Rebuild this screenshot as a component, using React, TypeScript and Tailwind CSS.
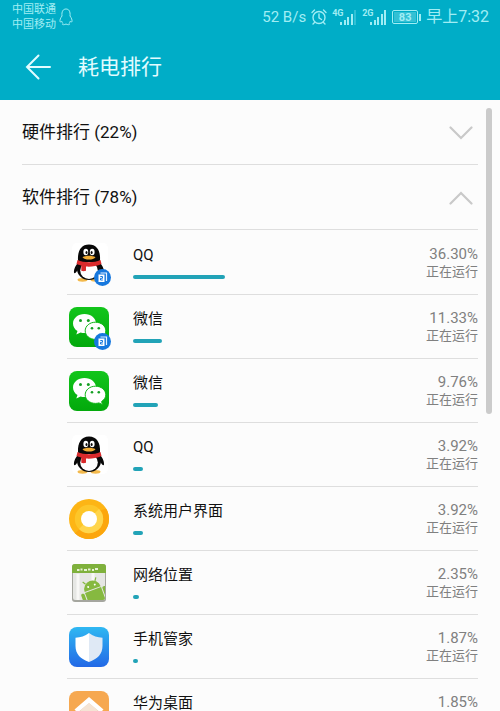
import { useState } from "react";

type IconName = "qq" | "wechat" | "ring" | "location" | "shield" | "home";

interface AppUsage {
  name: string;
  icon: IconName;
  percent: number;
  cloned?: boolean;
}

const apps: AppUsage[] = [
  { name: "QQ", icon: "qq", percent: 36.3, cloned: true },
  { name: "微信", icon: "wechat", percent: 11.33, cloned: true },
  { name: "微信", icon: "wechat", percent: 9.76 },
  { name: "QQ", icon: "qq", percent: 3.92 },
  { name: "系统用户界面", icon: "ring", percent: 3.92 },
  { name: "网络位置", icon: "location", percent: 2.35 },
  { name: "手机管家", icon: "shield", percent: 1.87 },
  { name: "华为桌面", icon: "home", percent: 1.85 },
];

function QQIcon() {
  return (
    <svg viewBox="0 0 40 40" className="size-10" aria-hidden="true">
      <rect x="3" width="36" height="39" rx="5" fill="#fff" />
      <ellipse cx="13.5" cy="36.8" rx="5" ry="1.9" fill="#f3b94c" />
      <ellipse cx="26.5" cy="36.8" rx="5" ry="1.9" fill="#f3b94c" />
      <path d="M9.5 19C7 22 4.600 26 5 29.500c.2 1.500 2 .3 3.400-2zM30.500 19c2.500 3 4.900 7 4.500 10.500-.2 1.500-2 .3-3.400-2z" fill="#080808" />
      <ellipse cx="20" cy="26" rx="12" ry="11" fill="#080808" />
      <path d="M9 17C8.500 8 12 1.500 20 1.500S31.500 8 31 17l-2 6H11z" fill="#080808" />
      <ellipse cx="20" cy="27.500" rx="8.800" ry="8.500" fill="#fff" />
      <ellipse cx="16.800" cy="9" rx="2.400" ry="3.200" fill="#fff" />
      <ellipse cx="23.200" cy="9" rx="2.400" ry="3.200" fill="#fff" />
      <ellipse cx="17.500" cy="9.500" rx="1" ry="1.500" fill="#080808" />
      <ellipse cx="22.600" cy="9.500" rx="1" ry="1.500" fill="#080808" />
      <path d="M13.500 14.200c3-2 10-2 13 0-2 3.200-11 3.200-13 0z" fill="#f0ac35" />
      <path d="M8.500 17c6.500 3 16.500 3 23 0l1 4c-5 2.200-11 3-15.500 2.500v4.200c-1.500.6-3.500.6-4.700 0v-5.200c-2-.4-3.500-.9-4.800-1.500z" fill="#d92a2c" />
    </svg>
  );
}

function WeChatIcon() {
  return (
    <svg viewBox="0 0 40 40" className="size-10" aria-hidden="true">
      <defs>
        <linearGradient id="wechat" x1="0" y1="0" x2="0" y2="1">
          <stop stopColor="#12c51b" />
          <stop offset="1" stopColor="#03a90c" />
        </linearGradient>
      </defs>
      <rect width="40" height="40" rx="8" fill="url(#wechat)" />
      <path d="M15.500 7C9 7 4 11.200 4 16.500c0 3.200 1.800 5.900 4.500 7.600L7.300 27.500l4.300-2.100c1.200.4 2.500.6 3.900.6C22 26 27 21.800 27 16.500S22 7 15.500 7z" fill="#fff" />
      <path d="M26.500 15.200c-5.800 0-10.300 3.800-10.300 8.600s4.500 8.600 10.300 8.600c1.200 0 2.300-.2 3.400-.5l3.600 1.700-.9-3.100c2.600-1.600 4.200-4 4.200-6.700 0-4.800-4.500-8.600-10.300-8.600z" fill="#fff" stroke="#0eb516" />
      <g fill="#159f24">
        <circle cx="11.500" cy="13.500" r="1.500" />
        <circle cx="19.300" cy="13.500" r="1.500" />
        <circle cx="23" cy="21.200" r="1.300" />
        <circle cx="29.800" cy="21.200" r="1.300" />
      </g>
    </svg>
  );
}

function RingIcon() {
  return (
    <svg viewBox="0 0 40 40" className="size-10" aria-hidden="true">
      <circle cx="20" cy="20" r="20" fill="#fdb515" />
      <path d="M6 34.300A20 20 0 0 0 40 20c0-4-1-7.500-3-10.500L30 12z" fill="#fca60d" />
      <circle cx="20" cy="20" r="14.200" fill="#fdc629" />
      <path d="M10 30A14.200 14.200 0 0 0 34.200 20c0-4-1.500-7.300-4.200-10z" fill="#ffd54b" />
      <circle cx="20" cy="20" r="8" fill="#fff" />
    </svg>
  );
}

function LocationIcon() {
  return (
    <svg viewBox="0 0 40 40" className="size-10" aria-hidden="true">
      <defs>
        <clipPath id="card">
          <rect x="4" y="2" width="32" height="35" rx="2" />
        </clipPath>
      </defs>
      <rect x="3" y="1" width="34" height="38" rx="3" fill="#a5a69f" />
      <rect x="4" y="2" width="32" height="35" rx="2" fill="#e6e7e4" />
      <path d="M3 10V4c0-2 1-3 3-3h28c2 0 3 1 3 3v6z" fill="#7fb13c" />
      <path d="M8 7h2.500M11.500 6.500h2M15 7h3M19 6.500h2.500M23 7h2M26 6h3" stroke="#e7f2d5" strokeWidth="2" />
      <path d="M9 11v26M24 10v8" stroke="#f8f8f6" strokeWidth="3" />
      <g clipPath="url(#card)">
        <g transform="rotate(-20 24 27)" fill="#86b940">
          <path d="M15.500 26a8.500 8.500 0 0 1 17 0z" />
          <path d="M15.500 27h17v13h-17z" />
          <rect x="11" y="27" width="3.500" height="10" rx="1.700" />
          <rect x="33.500" y="27" width="3.500" height="10" rx="1.700" />
          <path d="M19 19l-2-3M29 19l2-3" stroke="#86b940" strokeWidth="1.200" />
          <circle cx="20.500" cy="22.500" r="1" fill="#fff" />
          <circle cx="27.500" cy="22.500" r="1" fill="#fff" />
        </g>
      </g>
    </svg>
  );
}

function ShieldIcon() {
  return (
    <svg viewBox="0 0 40 40" className="size-10" aria-hidden="true">
      <defs>
        <linearGradient id="shield" x1="0" y1="0" x2="0" y2="1">
          <stop stopColor="#2fb8f2" />
          <stop offset="1" stopColor="#2268e6" />
        </linearGradient>
      </defs>
      <rect width="40" height="40" rx="8" fill="url(#shield)" />
      <path d="M20 6c4 3.300 8.500 4.500 13.500 4.700V19c0 8-5 13-13.500 16z" fill="#dfe9f5" />
      <path d="M20 6c-4 3.300-8.500 4.500-13.500 4.700V19c0 8 5 13 13.500 16z" fill="#fff" />
    </svg>
  );
}

function HomeIcon() {
  return (
    <svg viewBox="0 0 40 40" className="size-10" aria-hidden="true">
      <rect width="40" height="40" rx="8" fill="#f6a850" />
      <path d="M20 10L9 20v14h22V20z" fill="#ecd6c0" />
      <path d="M20 6L5.500 18.500l3 3L20 12l11.500 9.500 3-3z" fill="#fff" />
      <path d="M20 12l-8 7v15h16V19z" fill="#f5e4d4" />
    </svg>
  );
}

function CloneBadge() {
  return (
    <svg viewBox="0 0 17 17" className="absolute -right-[2px] -bottom-[3px] size-[17px]" aria-hidden="true">
      <circle cx="8.500" cy="8.500" r="8.500" fill="#1778de" />
      <path d="M6.500 4h6v8" fill="none" stroke="#e5f2ff" strokeWidth="1.200" />
      <rect x="4.500" y="5.500" width="6" height="7.500" fill="#fff" />
      <path d="M6.300 7.500h2.200v1.800H6.500V11h2.300" fill="none" stroke="#1778de" />
    </svg>
  );
}

const icons: Record<IconName, () => React.JSX.Element> = {
  qq: QQIcon,
  wechat: WeChatIcon,
  ring: RingIcon,
  location: LocationIcon,
  shield: ShieldIcon,
  home: HomeIcon,
};

function Signal({ label, weak }: { label: string; weak?: boolean }) {
  return (
    <div className="flex h-4 items-start">
      <span className="w-2 text-[9px] leading-[8px] font-bold">{label}</span>
      <svg viewBox="0 0 17 16" className="h-4 w-[17px]" fill="currentColor" aria-hidden="true">
        <path d="M0 13h2v3H0zM4 11h2v5H4zM7 8h2v8H7zM11 5h2v11h-2z" />
        <path d="M14 1h2v15h-2z" opacity={weak ? 0.3 : 1} />
      </svg>
    </div>
  );
}

function StatusBar() {
  return (
    <div className="flex h-[34px] items-center justify-between pr-[11px] pl-3 text-[#a0edf4]">
      <div className="flex items-center gap-[3px]">
        <div className="text-[11px] leading-[15px]">
          <div>中国联通</div>
          <div>中国移动</div>
        </div>
        <svg viewBox="0 0 14 18" className="h-[18px] w-[14px]" fill="none" stroke="currentColor" aria-hidden="true">
          <path d="M3 8C2.500 3.500 4 1 7 1s4.500 2.500 4 7c1.500 2 2.300 4 2 5.500-.3.800-1 .3-1.600-.5-.3 1-.7 1.800-1.400 2.500.8.500.8 1.200-.5 1.200-1 0-1.700-.3-2.500-.7-.8.400-1.500.7-2.500.7-1.300 0-1.300-.7-.5-1.200-.7-.7-1.100-1.500-1.400-2.500C2 13.800 1.300 14.300 1 13.500.7 12 1.500 10 3 8z" />
        </svg>
      </div>
      <div className="flex items-center gap-[5px] text-[15px] leading-4">
        <span>52 B/s</span>
        <svg viewBox="0 0 16 16" className="size-4" fill="none" stroke="currentColor" strokeWidth="1.400" strokeLinecap="round" aria-hidden="true">
          <circle cx="8" cy="8.500" r="6" />
          <path d="M8 5v3.800l2.500 1.700M1 3.500L3.500 1M15 3.500L12.500 1M3.500 13.500L2 15M12.500 13.500L14 15" />
        </svg>
        <Signal label="4G" weak />
        <Signal label="2G" />
        <div className="flex items-center gap-px">
          <div className="flex h-[14px] w-[26px] rounded-[2px] border border-current p-px">
            <span className="flex-1 bg-[#7fdde8]/40 text-center text-[11px] leading-[11px] font-bold">83</span>
          </div>
          <div className="h-[7px] w-[2px] bg-current" />
        </div>
        <span className="text-base leading-4">早上7:32</span>
      </div>
    </div>
  );
}

function SectionHeader({ title, open, onToggle }: { title: string; open: boolean; onToggle: () => void }) {
  return (
    <button
      type="button"
      aria-expanded={open}
      onClick={onToggle}
      className="flex h-[65px] w-full items-center justify-between border-b border-[#dedede] pt-px pr-[5px] text-left text-[17px] text-[#111]"
    >
      <span>{title}</span>
      <svg viewBox="0 0 24 14" className="h-[14px] w-6" fill="none" stroke="#c9c9c9" strokeWidth="2.200" strokeLinecap="round" aria-hidden="true">
        <path d={open ? "M1.500 12.500L12 2l10.500 10.500" : "M1.500 1.500L12 12 22.500 1.500"} />
      </svg>
    </button>
  );
}

function AppRow({ app }: { app: AppUsage }) {
  const Icon = icons[app.icon];
  return (
    <li className="flex h-16 items-center border-b border-[#dedede] pl-[2px]">
      <div className="relative mr-6 shrink-0">
        <Icon />
        {app.cloned && <CloneBadge />}
      </div>
      <div className="flex flex-1 flex-col gap-[9px] pb-[2px]">
        <span className="text-[15px] leading-[22px] text-[#111]">{app.name}</span>
        <div
          role="progressbar"
          aria-label={app.name}
          aria-valuenow={app.percent}
          aria-valuemin={0}
          aria-valuemax={100}
          className="h-1"
        >
          <div className="h-1 rounded-full bg-[#22a3b7]" style={{ width: `${app.percent}%` }} />
        </div>
      </div>
      <div className="w-[92px] text-right text-[#808080]">
        <div className="text-[15px] leading-[18px]">{app.percent.toFixed(2)}%</div>
        <div className="text-[13px] leading-[18px]">正在运行</div>
      </div>
    </li>
  );
}

export default function App() {
  const [hardwareOpen, setHardwareOpen] = useState(false);
  const [softwareOpen, setSoftwareOpen] = useState(true);
  return (
    <div className="flex h-screen flex-col overflow-hidden bg-[#fcfcfc] font-[Roboto,'Noto_Sans_CJK_SC',sans-serif]">
      <header className="shrink-0 bg-[#00adc7]">
        <StatusBar />
        <div className="flex h-[66px] items-center gap-[27px] pl-[25px] text-[#e2fcff]">
          <button type="button" aria-label="返回">
            <svg viewBox="0 0 26 26" className="size-[26px]" fill="none" stroke="currentColor" strokeWidth="2" strokeLinecap="round" aria-hidden="true">
              <path d="M25 13H2M13.500 1.500L2 13l11.500 11.500" />
            </svg>
          </button>
          <h1 className="pt-[2px] text-[21px]">耗电排行</h1>
        </div>
      </header>
      <div className="relative min-h-0 flex-1">
        <main className="h-full overflow-y-auto pr-[22px] pl-[22px] [scrollbar-width:none]">
          <SectionHeader title="硬件排行 (22%)" open={hardwareOpen} onToggle={() => setHardwareOpen(!hardwareOpen)} />
          <SectionHeader title="软件排行 (78%)" open={softwareOpen} onToggle={() => setSoftwareOpen(!softwareOpen)} />
          {softwareOpen && (
            <ul className="pt-px pl-[45px]">
              {apps.map((app, i) => (
                <AppRow key={i} app={app} />
              ))}
            </ul>
          )}
        </main>
        <div className="absolute top-2 right-2 h-1/2 w-[6px] rounded-full bg-[#cbcbcb]" />
      </div>
    </div>
  );
}
